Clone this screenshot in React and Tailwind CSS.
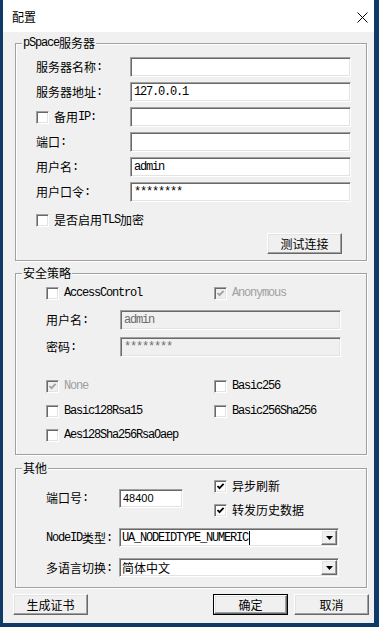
import React from "react";

const MONO = "font-['Liberation_Mono',monospace] text-[12px] tracking-[-1.2px]";
const CJK = "font-['Noto_Sans_CJK_SC',sans-serif] text-[12px]";

function T({ s }) {
  const parts = s.split(/([\x20-\x7E]+)/).filter(Boolean);
  return parts.map((p, i) =>
    /^[\x20-\x7E]+$/.test(p) ? (
      <span key={i} className={MONO}>{p}</span>
    ) : (
      <span key={i} className={CJK}>{p}</span>
    )
  );
}

const SUNKEN =
  "border border-t-[#a0a0a0] border-l-[#a0a0a0] border-b-white border-r-white shadow-[inset_1px_1px_0_#696969,inset_-1px_-1px_0_#e3e3e3]";
const RAISED =
  "border border-t-white border-l-white border-b-[#696969] border-r-[#696969] shadow-[inset_-1px_-1px_0_#a0a0a0,inset_1px_1px_0_#e3e3e3] bg-[#f0f0f0]";

function Box({ checked, disabled }) {
  return (
    <span
      className={
        disabled
          ? `w-[13px] h-[13px] shrink-0 flex items-center justify-center bg-[#f0f0f0] ${SUNKEN}`
          : `w-[13px] h-[13px] shrink-0 flex items-center justify-center bg-white ${SUNKEN}`
      }
    >
      {checked && (
        <svg width="9" height="9" viewBox="0 0 9 9">
          <path
            d="M1.5 4 L3.5 6.2 L7.6 1.8"
            fill="none"
            stroke={disabled ? "#a0a0a0" : "#000"}
            strokeWidth="1.8"
          />
        </svg>
      )}
    </span>
  );
}

function Check({ label, checked, disabled }) {
  return (
    <div className="flex items-center h-[20px] gap-[5px]">
      <Box checked={checked} disabled={disabled} />
      <div className={disabled ? "flex items-center h-[16px] text-[#a0a0a0]" : "flex items-center h-[16px] text-black"}>
        <T s={label} />
      </div>
    </div>
  );
}

function Field({ value, disabled, className }) {
  return (
    <div
      className={
        disabled
          ? `h-[20px] flex items-center pl-[3px] bg-[#f0f0f0] text-[#6d6d6d] ${SUNKEN} ${className}`
          : `h-[20px] flex items-center pl-[3px] bg-white text-black ${SUNKEN} ${className}`
      }
    >
      <span className={`${MONO} leading-[16px]`}>{value}</span>
    </div>
  );
}

function Button({ label, primary }) {
  if (primary) {
    return (
      <div className="w-[75px] h-[21px] border border-black flex">
        <div className={`flex-1 flex items-center justify-center ${RAISED}`}>
          <span className={`${CJK} leading-[16px]`}>{label}</span>
        </div>
      </div>
    );
  }
  return (
    <div className={`w-[75px] h-[21px] flex items-center justify-center ${RAISED}`}>
      <span className={`${CJK} leading-[16px]`}>{label}</span>
    </div>
  );
}

function Combo({ children }) {
  return (
    <div className={`flex-1 h-[19px] flex items-stretch bg-white ${SUNKEN}`}>
      <div className="flex-1 flex items-center pl-[2px] pt-[1px] pb-[1px]">{children}</div>
      <div className="p-[1px] flex">
        <div className={`w-[16px] flex items-center justify-center ${RAISED}`}>
          <svg width="7" height="4" viewBox="0 0 7 4">
            <path d="M0 0 H7 L3.5 4 Z" fill="#000" />
          </svg>
        </div>
      </div>
    </div>
  );
}

function Group({ title, className, children }) {
  return (
    <fieldset
      className={`border border-[#a0a0a0] shadow-[inset_1px_1px_0_#fff,1px_1px_0_#fff] ml-[12px] mr-[7px] ${className}`}
    >
      <legend className="ml-[6px] px-[1px] bg-[#f0f0f0]">
        <div className="flex items-center h-[16px]">
          <T s={title} />
        </div>
      </legend>
      {children}
    </fieldset>
  );
}

function Label({ s, w }) {
  return (
    <div className={`${w} shrink-0 flex items-center h-[16px]`}>
      <T s={s} />
    </div>
  );
}

export default function App() {
  return (
    <div className="w-[379px] h-[627px] bg-[#0f3a68] pl-[3px] overflow-hidden">
      <div className="w-[371px] h-[623px] bg-[#f0f0f0] flex flex-col text-black">
        {/* Title bar */}
        <div className="h-[32px] bg-white flex items-center justify-between pl-[9px] pr-[6px] pt-[2px] shrink-0">
          <span className={`${CJK} leading-[16px]`}>配置</span>
          <svg width="11" height="11" viewBox="0 0 11 11">
            <path d="M0.5 0.5 L10.5 10.5 M10.5 0.5 L0.5 10.5" stroke="#000" strokeWidth="1" />
          </svg>
        </div>

        {/* pSpace服务器 */}
        <Group title="pSpace服务器" className="mt-[3px]">
          <div className="pl-[20px] pr-[15px] pt-[6px] pb-[6px] flex flex-col">
            <div className="flex flex-col gap-[5px]">
              <div className="flex items-center">
                <Label s="服务器名称:" w="w-[94px]" />
                <Field value="" className="flex-1" />
              </div>
              <div className="flex items-center">
                <Label s="服务器地址:" w="w-[94px]" />
                <Field value="127.0.0.1" className="flex-1" />
              </div>
              <div className="flex items-center">
                <div className="w-[94px] shrink-0">
                  <Check label="备用IP:" />
                </div>
                <Field value="" className="flex-1" />
              </div>
              <div className="flex items-center">
                <Label s="端口:" w="w-[94px]" />
                <Field value="" className="flex-1" />
              </div>
              <div className="flex items-center">
                <Label s="用户名:" w="w-[94px]" />
                <Field value="admin" className="flex-1" />
              </div>
              <div className="flex items-center">
                <Label s="用户口令:" w="w-[94px]" />
                <Field value="********" className="flex-1" />
              </div>
            </div>
            <div className="mt-[8px]">
              <Check label="是否启用TLS加密" />
            </div>
            <div className="mt-[3px] flex justify-end pr-[9px]">
              <Button label="测试连接" />
            </div>
          </div>
        </Group>

        {/* 安全策略 */}
        <Group title="安全策略" className="mt-[4px]">
          <div className="pl-[30px] pr-[25px] pt-[2px] pb-[9px] flex flex-col">
            <div className="flex">
              <div className="w-[168px] shrink-0">
                <Check label="AccessControl" />
              </div>
              <Check label="Anonymous" checked disabled />
            </div>
            <div className="flex items-center mt-[7px]">
              <Label s="用户名:" w="w-[74px]" />
              <Field value="admin" disabled className="flex-1" />
            </div>
            <div className="flex items-center mt-[7px]">
              <Label s="密码:" w="w-[74px]" />
              <Field value="********" disabled className="flex-1" />
            </div>
            <div className="flex mt-[19px]">
              <div className="w-[168px] shrink-0">
                <Check label="None" checked disabled />
              </div>
              <Check label="Basic256" />
            </div>
            <div className="flex mt-[5px]">
              <div className="w-[168px] shrink-0">
                <Check label="Basic128Rsa15" />
              </div>
              <Check label="Basic256Sha256" />
            </div>
            <div className="flex mt-[4px]">
              <Check label="Aes128Sha256RsaOaep" />
            </div>
          </div>
        </Group>

        {/* 其他 */}
        <Group title="其他" className="mt-[5px]">
          <div className="pl-[30px] pr-[27px] pt-0 pb-[10px] flex flex-col">
            <div className="flex">
              <div className="w-[168px] shrink-0 flex items-center">
                <Label s="端口号:" w="w-[73px]" />
                <div className={`w-[64px] h-[19px] flex items-center pl-[3px] bg-white ${SUNKEN}`}>
                  <span className="font-['Liberation_Sans',sans-serif] text-[11px] leading-[14px]">48400</span>
                </div>
              </div>
              <div className="flex flex-col gap-[4px]">
                <Check label="异步刷新" checked />
                <Check label="转发历史数据" checked />
              </div>
            </div>
            <div className="flex items-center mt-[8px]">
              <Label s="NodeID类型:" w="w-[73px]" />
              <Combo>
                <span className={`${MONO} leading-[14px]`}>UA_NODEIDTYPE_NUMERIC</span>
                <span className="w-[1px] h-[14px] bg-black ml-[1px]" />
              </Combo>
            </div>
            <div className="flex items-center mt-[11px]">
              <Label s="多语言切换:" w="w-[73px]" />
              <Combo>
                <span className={`${CJK} leading-[14px]`}>简体中文</span>
              </Combo>
            </div>
          </div>
        </Group>

        {/* Buttons */}
        <div className="mt-[6px] flex items-center pl-[10px] pr-[5px]">
          <Button label="生成证书" />
          <div className="flex-1" />
          <div className="flex gap-[6px]">
            <Button label="确定" primary />
            <Button label="取消" />
          </div>
        </div>
      </div>
    </div>
  );
}
